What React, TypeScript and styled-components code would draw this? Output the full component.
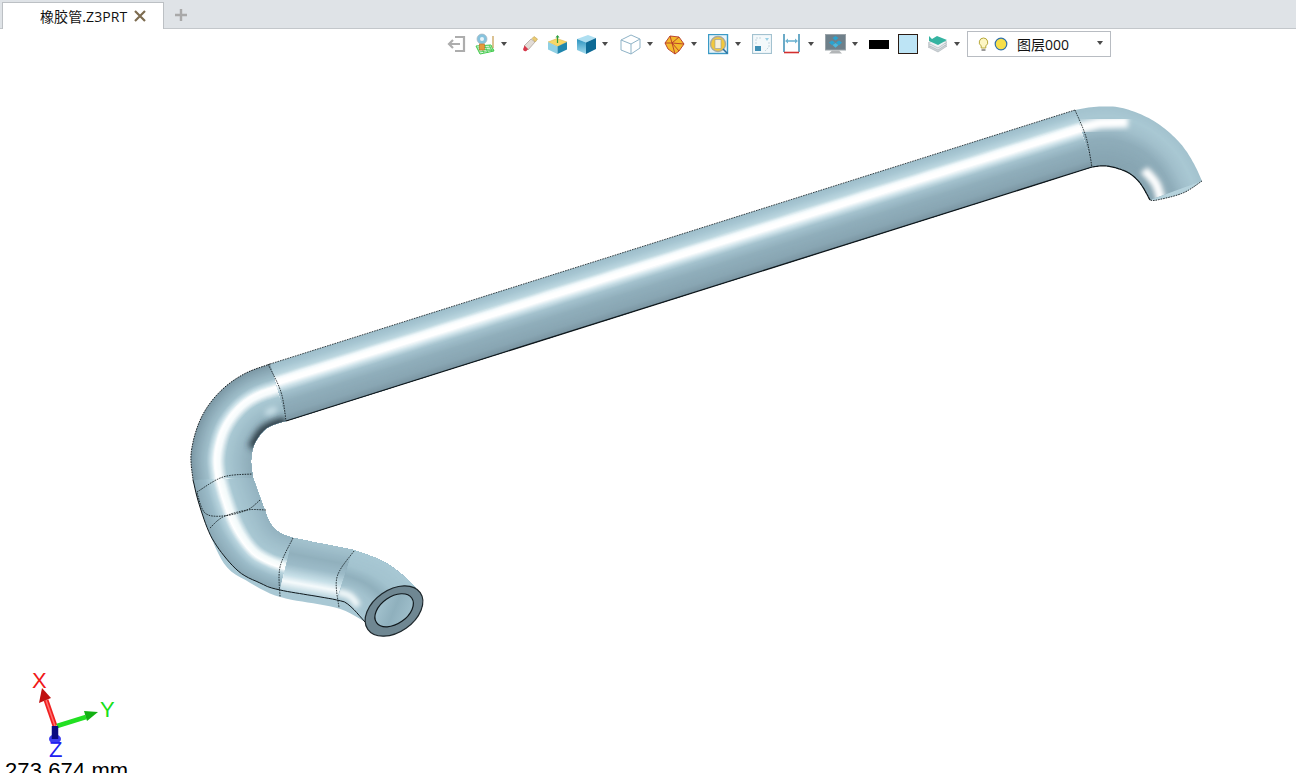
import React, { FunctionComponent, ReactNode } from "react";
import styled, { createGlobalStyle } from "styled-components";

type Pt = [number, number];
type Stop = [number, string];

const GlobalStyle = createGlobalStyle`
  html, body {
    margin: 0;
    padding: 0;
    height: 773px;
    overflow: hidden;
    background: #fff;
  }
`
const Page = styled.div`
  display: flex;
  flex-direction: column;
  width: 1296px;
  height: 773px;
  overflow: hidden;
  font-family: "Open Sans", "Noto Sans CJK SC", sans-serif;
`
const TabStrip = styled.div`
  display: flex;
  align-items: flex-end;
  flex: none;
  height: 29px;
  padding-left: 2px;
  box-sizing: border-box;
  background: #dfe3e7;
  border-bottom: 1px solid #c3c7cb;
`
const Tab = styled.div`
  display: flex;
  align-items: center;
  width: 162px;
  height: 27px;
  margin-bottom: -1px;
  padding-left: 37px;
  box-sizing: border-box;
  background: #fff;
  border: 1px solid #bcc0c4;
  border-bottom: none;
  font-size: 14px;
  letter-spacing: 0.1px;
  color: #111;
`
const TabClose = styled.svg`
  width: 14px;
  height: 14px;
  margin-left: 6px;
`
const TabAdd = styled.svg`
  width: 14px;
  height: 14px;
  margin-left: 10px;
  margin-bottom: 6px;
`
const Toolbar = styled.div`
  display: flex;
  align-items: center;
  flex: none;
  height: 30px;
  padding-left: 445px;
  box-sizing: border-box;
`
const Tool = styled.div<{ $w: number; $gap: number }>`
  display: flex;
  align-items: center;
  justify-content: center;
  flex: none;
  width: ${(p) => p.$w}px;
  height: 22px;
  margin-left: ${(p) => p.$gap}px;

  svg {
    display: block;
  }
`
const Caret = styled.span`
  display: block;
  width: 0;
  height: 0;
  border-left: 3.5px solid transparent;
  border-right: 3.5px solid transparent;
  border-top: 4px solid #4a4a4a;
`
const BlackSwatch = styled.span`
  display: block;
  width: 20px;
  height: 9px;
  background: #000;
`
const BlueSwatch = styled.span`
  display: block;
  width: 20px;
  height: 20px;
  box-sizing: border-box;
  background: #bde4f5;
  border: 1px solid #2b1c14;
`
const LayerSelect = styled.div`
  display: flex;
  align-items: center;
  flex: none;
  width: 144px;
  height: 26px;
  margin-left: 6px;
  padding-left: 10px;
  box-sizing: border-box;
  border: 1px solid #b8bcc2;
  font-size: 14px;
  color: #111;

  svg + svg {
    margin-left: 5px;
  }
`
const LayerName = styled.span`
  margin-left: 9px;
  flex: 1;
`
const SelectCaret = styled(Caret)`
  margin-right: 7px;
  margin-bottom: 3px;
`
const Viewport = styled.div`
  position: relative;
  flex: 1;
  overflow: hidden;
`
const Scene = styled.svg`
  display: block;
  width: 1296px;
  height: 714px;
`
const Triad = styled.svg`
  position: absolute;
  left: 20px;
  top: 605px;
  width: 110px;
  height: 100px;
`
const Measure = styled.div`
  position: absolute;
  left: 5px;
  top: 699px;
  font-family: "Liberation Sans", Arial, sans-serif;
  font-size: 22px;
  line-height: 25px;
  letter-spacing: 0.1px;
  color: #000;
  white-space: nowrap;
`

// smooth curve through the given points, then resampled evenly along its length
const sample = (pts: Pt[], count: number): Pt[] => {
  const dense: Pt[] = [];
  for (let i = 0; i < pts.length - 1; i++) {
    const p0 = pts[Math.max(i - 1, 0)];
    const p1 = pts[i];
    const p2 = pts[i + 1];
    const p3 = pts[Math.min(i + 2, pts.length - 1)];
    for (let k = 0; k < 24; k++) {
      const t = k / 24;
      const f = (a: number, b: number, c: number, d: number) =>
        0.5 * (2 * b + (c - a) * t + (2 * a - 5 * b + 4 * c - d) * t * t + (3 * b - a - 3 * c + d) * t * t * t);
      dense.push([f(p0[0], p1[0], p2[0], p3[0]), f(p0[1], p1[1], p2[1], p3[1])]);
    }
  }
  dense.push(pts[pts.length - 1]);
  const lens = [0];
  for (let i = 1; i < dense.length; i++) {
    lens.push(lens[i - 1] + Math.hypot(dense[i][0] - dense[i - 1][0], dense[i][1] - dense[i - 1][1]));
  }
  const total = lens[lens.length - 1];
  const out: Pt[] = [];
  let j = 0;
  for (let i = 0; i < count; i++) {
    const want = (total * i) / (count - 1);
    while (j < dense.length - 2 && lens[j + 1] < want) j++;
    const span = lens[j + 1] - lens[j] || 1;
    const u = Math.min(1, (want - lens[j]) / span);
    out.push([dense[j][0] + (dense[j + 1][0] - dense[j][0]) * u, dense[j][1] + (dense[j + 1][1] - dense[j][1]) * u]);
  }
  return out;
};

const toRgb = (hex: string) => [1, 3, 5].map((i) => parseInt(hex.slice(i, i + 2), 16));

const shade = (stops: Stop[], t: number) => {
  for (let i = 0; i < stops.length - 1; i++) {
    if (t <= stops[i + 1][0]) {
      const u = (t - stops[i][0]) / (stops[i + 1][0] - stops[i][0]);
      const a = toRgb(stops[i][1]);
      const b = toRgb(stops[i + 1][1]);
      return `rgb(${a.map((v, n) => Math.round(v + (b[n] - v) * u)).join(",")})`;
    }
  }
  return stops[stops.length - 1][1];
};

const polyline = (pts: Pt[]) => pts.map((p) => `${p[0].toFixed(1)},${p[1].toFixed(1)}`).join(" ");
const curve = (pts: Pt[]) => polyline(sample(pts, 60));

interface RibbonProps {
  id: string,
  outer: Pt[],
  inner: Pt[],
  stops: Stop[],
  children?: ReactNode
}

// a bent tube surface: colour bands laid over each other from one edge to the other
const Ribbon: FunctionComponent<RibbonProps> = ({ id, outer, inner, stops, children }) => {
  const N = 60;
  const M = 56;
  const a = sample(outer, N);
  const b = sample(inner, N);
  const rail = (t: number): Pt[] => a.map((p, i) => [p[0] + (b[i][0] - p[0]) * t, p[1] + (b[i][1] - p[1]) * t]);
  const end = [...b].reverse();
  const bands = [];
  for (let j = 0; j < M; j++) {
    bands.push(<polygon key={j} points={polyline([...rail(j / M), ...end])} fill={shade(stops, (j + 0.5) / M)} />);
  }
  return (
    <g>
      <clipPath id={id}>
        <polygon points={polyline([...a, ...end])} />
      </clipPath>
      {bands}
      <g clipPath={`url(#${id})`}>{children}</g>
    </g>
  );
};

const straightStops: Stop[] = [
  [0, "#9dbdca"], [0.1, "#a8c7d3"], [0.2, "#bcd7e0"], [0.26, "#f2f9fb"], [0.3, "#ffffff"], [0.37, "#ffffff"],
  [0.44, "#cfe3ea"], [0.52, "#a4c2ce"], [0.68, "#90aebb"], [0.88, "#89a6b3"], [1, "#7a95a2"],
];
const bendStops: Stop[] = [
  [0, "#7c97a4"], [0.1, "#8aa8b5"], [0.26, "#a0bfcb"], [0.34, "#cfe4eb"], [0.39, "#ffffff"],
  [0.48, "#f6fbfc"], [0.58, "#a9c8d3"], [0.78, "#9dbcc8"], [1, "#8eacb9"],
];
const twistStops: Stop[] = [
  [0, "#8aa8b5"], [0.2, "#9cbcc9"], [0.32, "#b9d5df"], [0.4, "#ffffff"], [0.5, "#f2f9fa"],
  [0.6, "#a9c8d3"], [0.8, "#a0bfcb"], [1, "#95b4c1"],
];
const runStops: Stop[] = [
  [0, "#a4c3cf"], [0.3, "#91b0bd"], [0.5, "#9dbcc9"], [0.7, "#c8e0e8"], [0.82, "#f6fbfc"], [1, "#b4d1dc"],
];
const tipStops: Stop[] = [
  [0, "#a8c7d3"], [0.3, "#a3c2ce"], [0.5, "#90b0bd"], [0.7, "#a3c3cf"], [1, "#a8c8d4"],
];
const topBendStops: Stop[] = [
  [0, "#a3c2ce"], [0.16, "#a9c8d3"], [0.34, "#a2c0cc"], [0.55, "#8fadba"], [0.78, "#8aa8b5"], [1, "#86a3b0"],
];

const lowerOuter: Pt[] = [[270, 364], [246, 373], [225, 387], [208, 406], [197, 428], [191, 455], [193, 480]];
const lowerInner: Pt[] = [[286, 421], [267, 428], [255, 443], [251, 460], [253, 478]];
const twistOuter: Pt[] = [[193, 480], [200, 507], [213, 540], [237, 570], [260, 583], [280, 590]];
const twistInner: Pt[] = [[253, 478], [262, 503], [270, 523], [280, 533], [293, 538]];
const tipOuter: Pt[] = [[337, 600], [350, 606], [365, 622]];
const tipInner: Pt[] = [[353, 550], [380, 560], [400, 573], [417, 590], [423, 606]];
const topOuter: Pt[] = [[1075, 110], [1093, 107], [1117, 107], [1140, 114], [1160, 125], [1180, 143], [1193, 162], [1202, 181]];
const topInner: Pt[] = [[1092, 167], [1107, 166], [1127, 172], [1140, 183], [1150, 200]];
const topEnd: Pt[] = [[1202, 181], [1183, 193], [1157, 200], [1150, 200]];

const Line = styled.polyline<{ $w?: number; $dash?: boolean }>`
  fill: none;
  stroke: #10181c;
  stroke-width: ${(p) => p.$w ?? 1}px;
  stroke-dasharray: ${(p) => (p.$dash ? "1.6 1" : "none")};
`

const Pipe = () => (
  <Scene viewBox="0 59 1296 714">
    <defs>
      <filter id="soft" x="-40%" y="-40%" width="180%" height="180%">
        <feGaussianBlur stdDeviation="3.4" />
      </filter>
      <filter id="softer" x="-40%" y="-40%" width="180%" height="180%">
        <feGaussianBlur stdDeviation="2.4" />
      </filter>
      <linearGradient id="bore" x1="0" y1="0" x2="1" y2="1">
        <stop offset="0" stopColor="#a9c8d4" />
        <stop offset="0.5" stopColor="#8fb0bd" />
        <stop offset="1" stopColor="#a5c4d0" />
      </linearGradient>
    </defs>

    {/* lighter skirt under the lower edge */}
    <polygon
      points={polyline(sample([[200, 507], [208, 530], [225, 565], [247, 581], [280, 597], [337, 608], [365, 622]], 40).concat([[380, 610], [337, 590], [280, 580], [240, 560], [215, 510]]))}
      fill="#a9c8d4"
    />

    <Ribbon id="clip-top" outer={topOuter} inner={topInner} stops={topBendStops}>
      <polyline points="1076,129 1100,123 1128,122" fill="none" stroke="#ffffff" strokeWidth="11" filter="url(#softer)" />
      <polyline points={curve([[1144, 170], [1156, 184], [1162, 204]])} fill="none" stroke="#ffffff" strokeWidth="9" filter="url(#softer)" />
      <polyline points={curve([[1127, 170], [1141, 184], [1150, 202]])} fill="none" stroke="#8aa8b5" strokeWidth="4" filter="url(#softer)" />
    </Ribbon>
    <polygon points={polyline(sample(topEnd, 20))} fill="#b5d2dc" />

    <Ribbon id="clip-straight" outer={[[270, 364], [1075, 110]]} inner={[[286, 421], [1092, 167]]} stops={straightStops} />

    <Ribbon id="clip-lower" outer={lowerOuter} inner={lowerInner} stops={bendStops}>
      <polyline points={curve([[286, 421], [264, 430], [252, 448]])} fill="none" stroke="#2b3b44" strokeWidth="9" filter="url(#soft)" />
      <ellipse cx="271" cy="411" rx="7" ry="3.5" fill="#c6dde5" filter="url(#softer)" transform="rotate(-25 271 411)" />
    </Ribbon>

    <Ribbon id="clip-twist" outer={twistOuter} inner={twistInner} stops={twistStops} />

    <Ribbon id="clip-run" outer={[[280, 590], [337, 600]]} inner={[[293, 538], [353, 550]]} stops={[...runStops].reverse().map(([t, c]) => [1 - t, c] as Stop)} />

    <Ribbon id="clip-tip" outer={tipOuter} inner={tipInner} stops={tipStops}>
      <polyline points={curve([[337, 592], [350, 596], [358, 606]])} fill="none" stroke="#f4fafb" strokeWidth="7" filter="url(#softer)" />
    </Ribbon>

    {/* edges */}
    <Line points="286,421 1092,167" $w={1.3} />
    <Line points="270,364 1075,110" $w={0.8} $dash />
    <Line points={curve(topInner)} $w={1.2} />
    <Line points={curve(topEnd)} $w={1} $dash />
    <Line points={curve(lowerOuter)} $w={1} $dash />
    <Line points={curve([[193, 480], [200, 507], [213, 540], [237, 570], [260, 583], [280, 590], [337, 600], [350, 606], [365, 622]])} $w={1} />

    {/* seams between the faces */}
    <Line points={curve([[1075, 110], [1086, 137], [1092, 167]])} $w={0.9} $dash />
    <Line points={curve([[268, 364], [281, 392], [286, 421]])} $w={0.9} $dash />
    <Line points={curve([[197, 492], [223, 477], [252, 474]])} $w={0.9} $dash />
    <Line points={curve([[197, 493], [205, 513], [223, 516], [247, 510], [260, 500]])} $w={0.9} $dash />
    <Line points={curve([[210, 528], [223, 517], [247, 510], [266, 510]])} $w={0.9} $dash />
    <Line points={curve([[293, 538], [280, 567], [280, 597]])} $w={0.9} $dash />
    <Line points={curve([[354, 551], [337, 577], [339, 608]])} $w={0.9} $dash />

    {/* open end of the hose */}
    <g transform="rotate(-35 394 611)">
      <ellipse cx="394" cy="611" rx="32" ry="21" fill="#6f8792" stroke="#1c262b" strokeWidth="1.2" />
      <ellipse cx="394.5" cy="610.5" rx="21.5" ry="13.5" fill="url(#bore)" stroke="#10181c" strokeWidth="1.2" />
    </g>
  </Scene>
);

const BackIcon = () => (
  <svg width="20" height="20" viewBox="0 0 20 20" fill="none" stroke="#adadad" strokeWidth="2.2">
    <path d="M9 3h9v14H9" />
    <path d="M14 10H3M7 6l-4 4 4 4" />
  </svg>
);
const LayerPlaneIcon = () => (
  <svg width="22" height="22" viewBox="0 0 22 22">
    <path d="M2 13l15-1 3 6-14 3z" fill="#eefaea" stroke="#3ec94a" strokeWidth="1" />
    <path d="M3 15l15-1M4 17l15-1M5 19l15-2M7 13l3 7M11 13l3 7M15 12l3 6" stroke="#3ec94a" strokeWidth="0.8" fill="none" />
    <path d="M19 3v12" stroke="#c9a25a" strokeWidth="1.3" />
    <circle cx="8" cy="6" r="5" fill="#86c3de" stroke="#a9b8c0" strokeWidth="0.7" />
    <circle cx="8" cy="6" r="2" fill="#eaf5fa" />
    <rect x="5.5" y="11" width="5" height="6" fill="#e79a3c" stroke="#b96f22" strokeWidth="0.6" />
  </svg>
);
const EraserIcon = () => (
  <svg width="20" height="20" viewBox="0 0 20 20">
    <path d="M11 5l4 3-7 8-4-4z" fill="#e2dcd6" stroke="#a89e94" strokeWidth="0.7" />
    <path d="M12 4.5l2-2 3.5 2.5-2.2 3z" fill="#eccb72" stroke="#b99d52" strokeWidth="0.6" />
    <path d="M4.5 11.5l3.6 3.6-1.7 1.8c-1 .7-2 .5-2.8-.3-.7-.9-.6-1.9.1-2.8z" fill="#d6384a" />
  </svg>
);
const ExtrudeIcon = () => (
  <svg width="21" height="21" viewBox="0 0 21 21">
    <path d="M1 8l9-3.5L20 8l-9.5 4.5z" fill="#f6d768" stroke="#d9ae45" strokeWidth="0.5" />
    <path d="M1 8l9.5 4.5V20L1 15.5z" fill="#8fd0e4" />
    <path d="M20 8l-9.5 4.5V20l9.5-4.5z" fill="#1f86ad" />
    <path d="M10.5 9V2" stroke="#2f9e3c" strokeWidth="1.2" />
    <path d="M8.5 3.5l2-2.5 2 2.5z" fill="#2f9e3c" />
  </svg>
);
const SolidCubeIcon = () => (
  <svg width="21" height="21" viewBox="0 0 21 21">
    <defs>
      <linearGradient id="cubeFront" x1="0" y1="0" x2="0" y2="1">
        <stop offset="0" stopColor="#2b93c0" />
        <stop offset="1" stopColor="#a4dcee" />
      </linearGradient>
    </defs>
    <path d="M1 5l11-4 8 3-10 4.5z" fill="#aedff1" />
    <path d="M1 5l9 3.5V20l-9-4z" fill="url(#cubeFront)" />
    <path d="M20 4l-10 4.5V20l10-5z" fill="#0e6a95" />
  </svg>
);
const WireCubeIcon = () => (
  <svg width="21" height="21" viewBox="0 0 21 21" fill="#fff" stroke="#8fb3c7" strokeWidth="1">
    <path d="M1 6l10-5 9 4v9l-9 6-10-4z" />
    <path d="M1 6l10 4 9-5M11 10v10" />
  </svg>
);
const FacetIcon = () => (
  <svg width="21" height="21" viewBox="0 0 21 21" fill="#f3b92c" stroke="#b5382a" strokeWidth="0.9">
    <path d="M6 2l9 1 5 7-5 7-4 3-7-5-3-6z" />
    <path d="M6 2l2 7 7-6M8 9l12 1M8 9L1 9M8 9l3 11M8 9l7 8" fill="none" />
  </svg>
);
const FitViewIcon = () => (
  <svg width="21" height="21" viewBox="0 0 21 21">
    <rect x="0.5" y="0.5" width="19" height="19" fill="#e6f3f8" stroke="#3b9ac6" strokeWidth="1.4" />
    <circle cx="10" cy="10" r="7.5" fill="#f3c93d" stroke="#a9a9a0" strokeWidth="1.4" />
    <rect x="7" y="5.5" width="6" height="9" fill="#f6f0dc" stroke="#8f9aa0" strokeWidth="0.6" />
    <path d="M15 15l4.5 4.5" stroke="#2f6f9c" strokeWidth="1.6" />
  </svg>
);
const SectionIcon = () => (
  <svg width="20" height="20" viewBox="0 0 20 20" fill="none">
    <rect x="0.5" y="0.5" width="19" height="19" fill="#f4f9fb" stroke="#a3c2d0" strokeWidth="1.2" />
    <path d="M4 10V4h5M17 8v5l-4 4" stroke="#c4d7e0" strokeWidth="1" strokeDasharray="2 1" />
    <path d="M13 4h4l-2 3z" fill="#9ad0e6" />
    <rect x="3" y="12" width="6" height="5" fill="#3f8fb5" />
  </svg>
);
const MeasureIcon = () => (
  <svg width="20" height="22" viewBox="0 0 20 22" fill="none">
    <path d="M2 1v18M17 1v18" stroke="#3b8fb5" strokeWidth="1.5" />
    <path d="M4 8h11" stroke="#6fb4d2" strokeWidth="1.6" />
    <path d="M3 8l3-2.5v5zM16 8l-3-2.5v5z" fill="#6fb4d2" />
    <path d="M2 19.5h15" stroke="#d22f2f" strokeWidth="1.6" />
  </svg>
);
const DisplayIcon = () => (
  <svg width="21" height="21" viewBox="0 0 21 21">
    <rect x="0.5" y="0.5" width="20" height="15.5" fill="#6f808a" stroke="#9aa3a8" strokeWidth="1" />
    <path d="M10.5 2l3 2-3 2.5-3-2.5z" fill="#2aa3d0" />
    <path d="M7 6.5l3 2-3 2.8-3-2.8zM14 6.5l3 2-3 2.8-3-2.8z" fill="#2aa3d0" />
    <path d="M10.5 9l3 2-3 2.8-3-2.8z" fill="#4bb8de" />
    <path d="M7 16.5h7l3 3H4z" fill="#b2b5b7" />
  </svg>
);
const LayersIcon = () => (
  <svg width="21" height="21" viewBox="0 0 21 21">
    <path d="M1 13l9-4 10 3-9 6z" fill="#cfd6da" stroke="#a5adb2" strokeWidth="0.6" />
    <path d="M1 11l9-4 10 3-9 6z" fill="#e6ebee" stroke="#a5adb2" strokeWidth="0.6" />
    <path d="M1 9l9-4 10 3-9 6z" fill="#eef1f3" stroke="#a5adb2" strokeWidth="0.6" />
    <path d="M2 2l3 3 5-3 10 4-9 5-9-4z" fill="#35b3a1" />
  </svg>
);
const BulbIcon = () => (
  <svg width="11" height="15" viewBox="0 0 11 15">
    <path d="M5.5 1a4.3 4.3 0 0 0-2.3 7.9V11h4.6V8.9A4.3 4.3 0 0 0 5.5 1z" fill="#fdf6c4" stroke="#b7a83a" strokeWidth="1" />
    <path d="M3.5 12h4v2h-4z" fill="#9a9a9a" />
  </svg>
);
const SunIcon = () => (
  <svg width="14" height="14" viewBox="0 0 14 14">
    <circle cx="7" cy="7" r="5.8" fill="#f7df4a" stroke="#2f6fa8" strokeWidth="1.2" />
  </svg>
);

const tools: { w: number, gap: number, node: ReactNode }[] = [
  { w: 22, gap: 0, node: <BackIcon /> },
  { w: 22, gap: 7, node: <LayerPlaneIcon /> },
  { w: 8, gap: 4, node: <Caret /> },
  { w: 20, gap: 12, node: <EraserIcon /> },
  { w: 21, gap: 7, node: <ExtrudeIcon /> },
  { w: 21, gap: 8, node: <SolidCubeIcon /> },
  { w: 8, gap: 4, node: <Caret /> },
  { w: 21, gap: 11, node: <WireCubeIcon /> },
  { w: 8, gap: 5, node: <Caret /> },
  { w: 21, gap: 10, node: <FacetIcon /> },
  { w: 8, gap: 5, node: <Caret /> },
  { w: 21, gap: 10, node: <FitViewIcon /> },
  { w: 8, gap: 5, node: <Caret /> },
  { w: 20, gap: 10, node: <SectionIcon /> },
  { w: 20, gap: 10, node: <MeasureIcon /> },
  { w: 8, gap: 5, node: <Caret /> },
  { w: 21, gap: 10, node: <DisplayIcon /> },
  { w: 8, gap: 5, node: <Caret /> },
  { w: 20, gap: 10, node: <BlackSwatch /> },
  { w: 20, gap: 9, node: <BlueSwatch /> },
  { w: 21, gap: 9, node: <LayersIcon /> },
  { w: 8, gap: 5, node: <Caret /> },
];

const App = () => {
  return (
    <Page>
      <GlobalStyle />
      <TabStrip>
        <Tab>
          橡胶管.Z3PRT
          <TabClose viewBox="0 0 14 14">
            <path d="M2 2l10 10M12 2L2 12" stroke="#7d6c50" strokeWidth="2.2" />
          </TabClose>
        </Tab>
        <TabAdd viewBox="0 0 14 14">
          <path d="M7 1v12M1 7h12" stroke="#a9a9a9" strokeWidth="2.4" />
        </TabAdd>
      </TabStrip>
      <Toolbar>
        {tools.map((tool, i) => (
          <Tool key={i} $w={tool.w} $gap={tool.gap}>{tool.node}</Tool>
        ))}
        <LayerSelect>
          <BulbIcon />
          <SunIcon />
          <LayerName>图层000</LayerName>
          <SelectCaret />
        </LayerSelect>
      </Toolbar>
      <Viewport>
        <Pipe />
        <Triad viewBox="20 664 110 100">
          <path d="M55 726L46 700" stroke="#f02020" strokeWidth="5" />
          <path d="M55 726L46 700" stroke="#ff7070" strokeWidth="1.5" />
          <path d="M42 688l9 10-12 5z" fill="#c01010" />
          <path d="M57 726L86 717" stroke="#22e022" strokeWidth="4.5" />
          <path d="M98 712l-14-1 3 10z" fill="#12b012" />
          <ellipse cx="55" cy="739" rx="6" ry="4.5" fill="#3d3df0" />
          <path d="M55 726v13" stroke="#0a0a80" strokeWidth="6.5" />
          <text x="32" y="688" fontFamily="Liberation Sans, sans-serif" fontSize="22" fill="#f01818">X</text>
          <text x="100" y="717" fontFamily="Liberation Sans, sans-serif" fontSize="22" fill="#18e018">Y</text>
          <text x="49" y="757" fontFamily="Liberation Sans, sans-serif" fontSize="22" fill="#2020f0">Z</text>
        </Triad>
        <Measure>273.674 mm</Measure>
      </Viewport>
    </Page>
  );
};

export default App;
